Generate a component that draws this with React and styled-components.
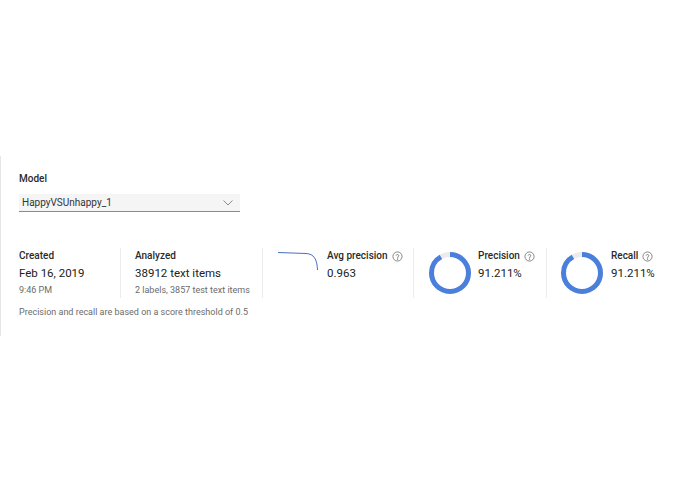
import React from 'react'
import styled, { createGlobalStyle } from 'styled-components'

const GlobalStyle = createGlobalStyle`
  body {
    margin: 0;
    background: #fff;
    font-family: Roboto, "Liberation Sans", sans-serif;
    color: #212121;
  }
`

const Panel = styled.div`
  margin-top: 156px;
  height: 180px;
  border-left: 1px solid #e6e6e6;
  padding: 16px 0 0 18px;
  box-sizing: border-box;
`

const Label = styled.div`
  font-size: 10px;
  font-weight: 500;
  line-height: 14px;
  color: #2a2a2a;
  display: flex;
  align-items: center;
  gap: 4px;
`

const Select = styled.div`
  margin-top: 8px;
  width: 221px;
  height: 18px;
  background: #f5f5f5;
  border-bottom: 1px solid #8a8a8a;
  display: flex;
  align-items: center;
  justify-content: space-between;
  padding: 0 7px 0 3px;
  box-sizing: border-box;
  font-size: 10px;
  color: #333;
`

const Stats = styled.div`
  display: flex;
  margin-top: 36px;
  height: 50px;
`

const Stat = styled.div`
  width: ${p => p.w}px;
  display: flex;
  gap: ${p => p.gap || 0}px;
  padding-left: ${p => p.pl || 0}px;
  border-right: ${p => (p.last ? 'none' : '1px solid #ececec')};
  box-sizing: border-box;
`

const StatText = styled.div`
  display: flex;
  flex-direction: column;
  padding-top: 1px;
`

const Value = styled.div`
  font-size: 11.5px;
  line-height: 16px;
  margin-top: 2px;
  color: #212121;
`

const Sub = styled.div`
  font-size: 9px;
  line-height: 12px;
  margin-top: 3px;
  color: #6b6b6b;
`

const Note = styled.div`
  margin-top: 9px;
  font-size: 9px;
  color: #6b6b6b;
`

const Help = () => (
  <svg width="11" height="11" viewBox="0 0 24 24" fill="none" stroke="#666" strokeWidth="1.7">
    <circle cx="12" cy="12" r="10" />
    <path d="M9.2 9.3a2.9 2.9 0 0 1 5.6 1c0 1.9-2.8 2.4-2.8 4.1" strokeLinecap="round" />
    <circle cx="12" cy="17.6" r="0.7" fill="#666" />
  </svg>
)

const Chevron = () => (
  <svg width="10" height="6" viewBox="0 0 10 6" fill="none" stroke="#8c8c8c" strokeWidth="1">
    <path d="M0.5 0.5l4.5 4.5L9.5 0.5" />
  </svg>
)

const Donut = ({ pct }) => {
  const r = 18.5
  const c = 2 * Math.PI * r
  return (
    <svg width="44" height="44" viewBox="0 0 44 44" style={{ marginTop: 3 }}>
      <circle cx="22" cy="22" r={r} fill="none" stroke="#ececec" strokeWidth="5" />
      <circle
        cx="22" cy="22" r={r} fill="none" stroke="#4a80dc" strokeWidth="5"
        strokeDasharray={`${(c * pct) / 100} ${c}`}
        transform="rotate(-90 22 22)"
      />
    </svg>
  )
}

const Curve = () => (
  <svg width="42" height="24" viewBox="0 0 42 24" style={{ marginTop: 3 }}>
    <path d="M1 1.5 L29 2.5 C37 3 40 8 40.5 19" fill="none" stroke="#4a6fc0" strokeWidth="1" />
  </svg>
)

export default function App() {
  return (
    <>
      <GlobalStyle />
      <Panel>
        <Label>Model</Label>
        <Select>
          <span>HappyVSUnhappy_1</span>
          <Chevron />
        </Select>
        <Stats>
          <Stat w={102}>
            <StatText>
              <Label>Created</Label>
              <Value>Feb 16, 2019</Value>
              <Sub>9:46 PM</Sub>
            </StatText>
          </Stat>
          <Stat w={142} pl={14}>
            <StatText>
              <Label>Analyzed</Label>
              <Value>38912 text items</Value>
              <Sub>2 labels, 3857 test text items</Sub>
            </StatText>
          </Stat>
          <Stat w={151} pl={14} gap={8}>
            <Curve />
            <StatText>
              <Label>Avg precision <Help /></Label>
              <Value>0.963</Value>
            </StatText>
          </Stat>
          <Stat w={133} pl={14} gap={6}>
            <Donut pct={91.2} />
            <StatText>
              <Label>Precision <Help /></Label>
              <Value>91.211%</Value>
            </StatText>
          </Stat>
          <Stat w={120} pl={13} gap={7} last>
            <Donut pct={91.2} />
            <StatText>
              <Label>Recall <Help /></Label>
              <Value>91.211%</Value>
            </StatText>
          </Stat>
        </Stats>
        <Note>Precision and recall are based on a score threshold of 0.5</Note>
      </Panel>
    </>
  )
}
